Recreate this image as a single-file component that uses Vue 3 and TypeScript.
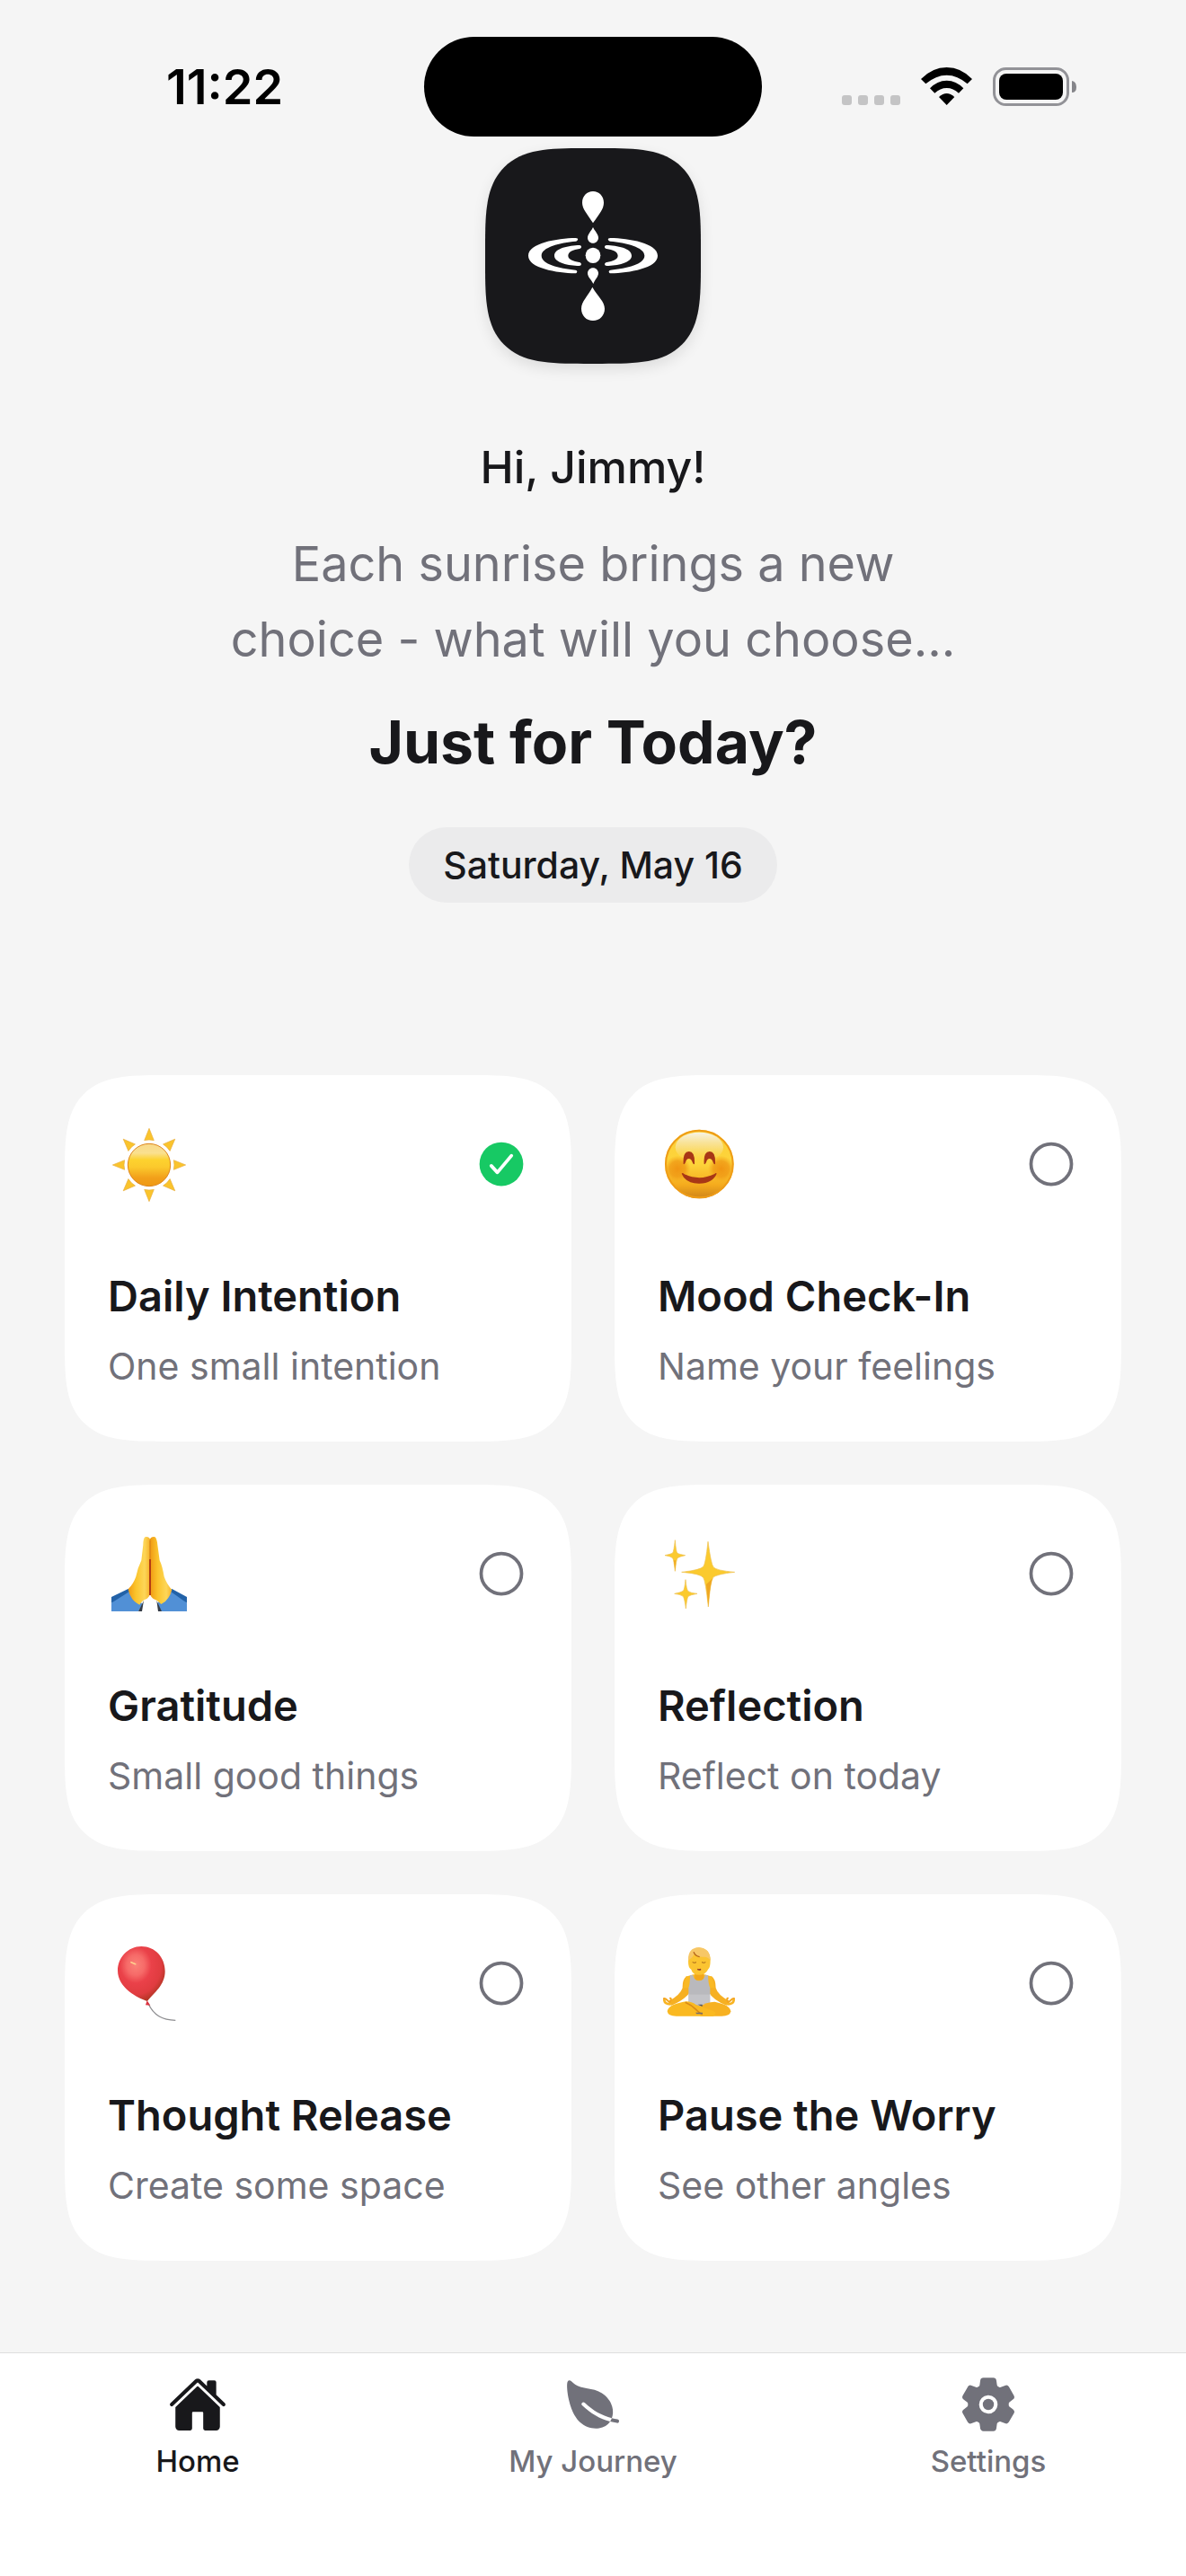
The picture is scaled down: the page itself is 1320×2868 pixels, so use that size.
<script setup lang="ts">
import { ref } from 'vue'

type ArtName = 'sun' | 'smile' | 'hands' | 'sparkles' | 'balloon' | 'lotus'

interface Practice {
  art: ArtName
  title: string
  note: string
  done: boolean
}

interface Tab {
  label: string
  href: string
  paths: string[]
}

const practices = ref<Practice[]>([
  { art: 'sun', title: 'Daily Intention', note: 'One small intention', done: true },
  { art: 'smile', title: 'Mood Check-In', note: 'Name your feelings', done: false },
  { art: 'hands', title: 'Gratitude', note: 'Small good things', done: false },
  { art: 'sparkles', title: 'Reflection', note: 'Reflect on today', done: false },
  { art: 'balloon', title: 'Thought Release', note: 'Create some space', done: false },
  { art: 'lotus', title: 'Pause the Worry', note: 'See other angles', done: false },
])

// Each drawing keeps its own origin inside a 288-unit square.
const viewBoxes: Record<ArtName, string> = {
  sun: '30 24 288 288',
  smile: '0 0 288 288',
  hands: '30 42 288 288',
  sparkles: '36 42 288 288',
  balloon: '30 30 288 288',
  lotus: '36 30 288 288',
}

const rays = [0, 45, 90, 135, 180, 225, 270, 315]

const active = ref('Home')

const tabs: Tab[] = [
  {
    label: 'Home',
    href: '#home',
    paths: [
      'M261.56 101.28a8 8 0 00-11.06 0L66.4 277.15a8 8 0 00-2.47 5.79L63.9 448a32 32 0 0032 32H192a16 16 0 0016-16V328a8 8 0 018-8h80a8 8 0 018 8v136a16 16 0 0016 16h96.06a32 32 0 0032-32V282.94a8 8 0 00-2.47-5.79z',
      'M490.91 244.15l-74.8-71.56V64a16 16 0 00-16-16h-48a16 16 0 00-16 16v32l-57.92-55.38C272.77 35.14 264.71 32 256 32c-8.68 0-16.72 3.14-22.14 8.63l-212.7 203.5c-6.22 6-7 15.87-1.34 22.37A16 16 0 0043 267.56L250.5 69.28a8 8 0 0111.06 0l207.52 198.28a16 16 0 0022.59-.44c6.14-6.36 5.63-16.86-.76-22.97z',
    ],
  },
  {
    label: 'My Journey',
    href: '#journey',
    paths: [
      'M161.35 242a16 16 0 0122.62-.68c73.63 69.36 147.51 111.56 234.45 133.07 11.73-32 12.77-67.22 2.64-101.58-13.44-45.59-44.74-85.31-90.49-114.86-40.84-26.38-81.66-33.25-121.15-39.89-49.82-8.38-96.88-16.3-141.79-63.85-5-5.26-11.81-7.37-18.32-5.66-7.44 2-12.43 7.88-14.82 17.6-5.6 22.75-2 86.51 13.75 153.82 25.29 108.14 65.65 162.86 95.06 189.73 38 34.69 87.62 53.9 136.93 53.9a186 186 0 0027.77-2.04c41.71-6.32 76.43-27.27 96-57.75-89.49-23.28-165.94-67.55-242-139.16a16 16 0 01-.65-22.65z',
      'M467.43 384.19c-16.83-2.59-33.13-5.84-49-9.77a157.71 157.71 0 01-12.13 25.68c-.73 1.25-1.5 2.49-2.29 3.71a584.21 584.21 0 0058.56 12 16 16 0 104.87-31.62z',
    ],
  },
  {
    label: 'Settings',
    href: '#settings',
    paths: [
      'M208 256a48 48 0 1096 0 48 48 0 10-96 0z',
      'M470.39 300l-.47-.38-31.56-24.75a16.11 16.11 0 01-6.1-13.33v-11.56a16 16 0 016.11-13.22L469.92 212l.47-.38a26.68 26.68 0 005.9-34.06l-42.71-73.9a1.59 1.59 0 01-.13-.22A26.86 26.86 0 00401 92.14l-.35.13-37.1 14.93a15.94 15.94 0 01-14.47-1.29q-4.92-3.1-10-5.86a15.94 15.94 0 01-8.19-11.82l-5.59-39.59-.12-.72A27.22 27.22 0 00298.76 26h-85.52a26.92 26.92 0 00-26.45 22.39l-.09.56-5.57 39.67a16 16 0 01-8.13 11.82 175.21 175.21 0 00-10 5.82 15.92 15.92 0 01-14.43 1.27l-37.13-15-.35-.14a26.87 26.87 0 00-32.48 11.34l-.13.22-42.77 73.95a26.71 26.71 0 005.9 34.1l.47.38 31.56 24.75a16.11 16.11 0 016.1 13.33v11.56a16 16 0 01-6.11 13.22L42.08 300l-.47.38a26.68 26.68 0 00-5.9 34.06l42.71 73.9a1.59 1.59 0 01.13.22 26.86 26.86 0 0032.45 11.3l.35-.13 37.07-14.93a15.94 15.94 0 0114.47 1.29q4.92 3.11 10 5.86a15.94 15.94 0 018.19 11.82l5.56 39.59.12.72A27.22 27.22 0 00213.24 486h85.52a26.92 26.92 0 0026.45-22.39l.09-.56 5.57-39.67a16 16 0 018.18-11.82c3.42-1.84 6.76-3.79 10-5.82a15.92 15.92 0 0114.43-1.27l37.13 14.95.35.14a26.85 26.85 0 0032.48-11.34 2.53 2.53 0 01.13-.22l42.71-73.89a26.7 26.7 0 00-5.89-34.11zm-134.48-40.24a80 80 0 11-83.66-83.67 80.21 80.21 0 0183.66 83.67z',
    ],
  },
]
</script>

<template>
  <div class="screen">
    <div class="status">
      <time class="clock">11:22</time>
      <div class="island"></div>
      <div class="signals">
        <div class="dots"><i v-for="n in 4" :key="n"></i></div>
        <svg class="wifi" viewBox="0 0 171 126" aria-hidden="true">
          <path d="M0 39Q38 0 86 0T171 39L155 55Q122 26 86 26T16 55Z" />
          <path d="M30 70Q54 44 86 44T142 70L126 86Q108 69 86 69T46 86Z" />
          <path d="M60 99Q86 75 112 99L86 126Z" />
        </svg>
        <svg class="battery" viewBox="0 0 93 43" aria-hidden="true">
          <rect x="1.5" y="1.5" width="82" height="40" rx="13" fill="none" stroke="#929297" stroke-width="3" />
          <rect x="7" y="7" width="71" height="29" rx="8" />
          <path d="M88 15Q93 16 93 22T88 28Z" fill="#85858a" />
        </svg>
      </div>
    </div>

    <main class="content">
      <header class="hero">
        <div class="logo">
          <svg viewBox="60 45 720 720" aria-hidden="true">
            <g fill="#fff">
              <path d="M420 189C440 189 456 205 456 227C456 248 440 266 420 295C402 266 384 248 384 227C384 205 400 189 420 189Z" />
              <path d="M420 309C426 322 438 332 438 344C438 354 430 362 420 362S402 354 402 344C402 332 414 322 420 309Z" />
              <ellipse cx="420" cy="403" rx="25" ry="26" />
              <path d="M420 445C430 445 438 453 438 463C438 474 428 482 421 498C412 482 402 474 402 463C402 453 410 445 420 445Z" />
              <path d="M418 509C436 540 459 557 459 581C459 604 442 621 420 621S381 604 381 581C381 557 402 540 418 509Z" />
              <path id="outer-ripple" d="M362 345C374 345 370 355 362 356C310 361 248 375 248 404C248 432 306 446 361 452C370 453 368 463 360 463C300 461 204 446 204 404C204 362 300 346 362 345Z" />
              <path id="inner-ripple" d="M375 369C384 370 382 380 375 381C354 384 337 391 337 404C337 416 354 422 374 426C384 428 382 438 374 438C340 437 291 428 291 404C291 379 340 370 375 369Z" />
              <use href="#outer-ripple" transform="matrix(-1 0 0 1 840 0)" />
              <use href="#inner-ripple" transform="matrix(-1 0 0 1 840 0)" />
            </g>
          </svg>
        </div>
        <p class="greeting">Hi, Jimmy!</p>
        <p class="quote">Each sunrise brings a new<br />choice - what will you choose...</p>
        <h1 class="headline">Just for Today?</h1>
        <p class="date">Saturday, May 16</p>
      </header>

      <section class="grid">
        <button v-for="item in practices" :key="item.title" type="button" class="card">
          <span class="card-top">
            <svg class="art" :viewBox="viewBoxes[item.art]" aria-hidden="true">
              <g v-if="item.art === 'sun'">
                <defs>
                  <linearGradient id="sun-body" x1="0" y1="0" x2="0" y2="1">
                    <stop offset="0" stop-color="#f8d98a" />
                    <stop offset=".22" stop-color="#fae08f" />
                    <stop offset=".38" stop-color="#fdd22f" />
                    <stop offset=".55" stop-color="#fbc92c" />
                    <stop offset=".8" stop-color="#f2a01a" />
                    <stop offset="1" stop-color="#ef9811" />
                  </linearGradient>
                </defs>
                <path
                  v-for="angle in rays"
                  :key="angle"
                  d="M168 49L184 89Q168 85 152 89Z"
                  fill="#fac42c"
                  stroke="#e9ad3c"
                  stroke-width="2"
                  :transform="`rotate(${angle} 168 171)`"
                />
                <circle cx="168" cy="171" r="71" fill="url(#sun-body)" stroke="#dd851b" stroke-width="3" />
              </g>

              <g v-else-if="item.art === 'smile'">
                <defs>
                  <linearGradient id="face" x1="0" y1="0" x2="0" y2="1">
                    <stop offset="0" stop-color="#fbd03a" />
                    <stop offset=".5" stop-color="#fdd43a" />
                    <stop offset=".8" stop-color="#f5ab1d" />
                    <stop offset="1" stop-color="#cf8419" />
                  </linearGradient>
                  <linearGradient id="shine" x1="0" y1="0" x2="0" y2="1">
                    <stop offset="0" stop-color="#f6f3e8" />
                    <stop offset=".5" stop-color="#f9e39a" stop-opacity=".7" />
                    <stop offset="1" stop-color="#fbdc62" stop-opacity="0" />
                  </linearGradient>
                  <radialGradient id="blush">
                    <stop offset="0" stop-color="#f09512" />
                    <stop offset=".6" stop-color="#f09a16" stop-opacity=".8" />
                    <stop offset="1" stop-color="#f5a51b" stop-opacity="0" />
                  </radialGradient>
                </defs>
                <circle cx="139" cy="144" r="115" fill="url(#face)" />
                <circle cx="139" cy="144" r="112" fill="none" stroke="#ee9c17" stroke-width="6" />
                <ellipse cx="139" cy="88" rx="80" ry="50" fill="url(#shine)" />
                <circle cx="66" cy="160" r="44" fill="url(#blush)" />
                <circle cx="212" cy="160" r="44" fill="url(#blush)" />
                <path
                  d="M86 144Q83 103 104 102T123 144Q118 146 116 138Q112 126 104 126T93 138Q90 146 86 144ZM155 144Q152 103 173 102T192 144Q187 146 185 138Q181 126 173 126T162 138Q159 146 155 144Z"
                  fill="#a83716"
                />
                <path d="M80 176Q83 172 88 177Q139 202 190 177Q195 172 197 176Q184 208 139 209T80 176Z" fill="#a83716" />
              </g>

              <g v-else-if="item.art === 'hands'">
                <defs>
                  <linearGradient id="palm" x1="0" y1="0" x2="1" y2="0">
                    <stop offset="0" stop-color="#f09a14" />
                    <stop offset=".35" stop-color="#fbc42c" />
                    <stop offset=".75" stop-color="#fdd658" />
                    <stop offset="1" stop-color="#f6b32a" />
                  </linearGradient>
                </defs>
                <path d="M42 284L98 237L146 288L132 312H42Z" fill="#5190d6" />
                <path d="M42 264L98 237L102 246L42 284Z" fill="#2262a8" />
                <path d="M294 284L244 237L196 284L208 312H294Z" fill="#5190d6" />
                <path d="M294 264L244 237L240 246L294 284Z" fill="#2262a8" />
                <path d="M132 312L150 276L144 312ZM210 312L193 276L198 312Z" fill="#333b46" />
                <path d="M171 70Q164 60 154 64Q148 70 148 90L142 142Q130 166 124 196Q116 220 98 238Q104 274 136 290Q146 274 160 270Q171 262 171 250Z" fill="url(#palm)" />
                <path d="M171 70Q178 60 188 64Q194 70 196 90L203 142Q212 160 218 196Q226 220 244 240Q236 274 208 288Q196 274 182 270Q171 262 171 250Z" fill="url(#palm)" />
                <path d="M171 74V142" stroke="#d98418" stroke-width="4" />
                <path d="M171 138V258" stroke="#b53c12" stroke-width="6" />
              </g>

              <g v-else-if="item.art === 'sparkles'" fill="#fbca2e" stroke="#eebf4b" stroke-width="2">
                <path d="M204 79Q214 154 222 164Q232 176 293 181Q232 188 221 199Q212 210 205 297Q196 210 188 199Q178 186 116 181Q178 174 188 163Q196 154 204 79Z" />
                <path d="M94 74Q97 114 102 118Q108 122 128 125Q108 129 102 134Q98 140 94 178Q90 140 86 134Q80 128 60 125Q80 121 86 117Q90 112 94 74Z" />
                <path d="M129 206Q132 240 138 245Q144 250 168 253Q144 257 138 262Q133 270 130 303Q126 270 121 262Q114 256 92 253Q114 249 121 244Q126 238 129 206Z" />
                <path d="M96 142L94 176L90 142ZM221 200Q212 210 205 295L198 222Z" fill="#efa722" stroke="none" />
              </g>

              <g v-else-if="item.art === 'balloon'">
                <defs>
                  <radialGradient id="rubber" cx=".38" cy=".34" r=".72">
                    <stop offset="0" stop-color="#fa8278" />
                    <stop offset=".26" stop-color="#f66a68" />
                    <stop offset=".46" stop-color="#ea4149" />
                    <stop offset=".75" stop-color="#e03c40" />
                    <stop offset="1" stop-color="#a5331c" />
                  </radialGradient>
                </defs>
                <path d="M164 240C184 284 214 297 256 298" fill="none" stroke="#8d8d90" stroke-width="4" />
                <path d="M142 51C188 51 221 88 221 134C221 180 184 206 162 234C130 224 63 190 63 132C63 88 98 51 142 51Z" fill="url(#rubber)" />
                <path d="M161 232L172 248L156 247Z" fill="#dc3340" />
                <path d="M108 104l14 6" stroke="#ffd08e" stroke-width="5" stroke-linecap="round" />
              </g>

              <g v-else>
                <path d="M134 150Q118 158 119 190Q112 212 74 234L82 248Q128 230 146 200ZM214 150Q230 158 230 190Q236 212 274 234L266 248Q220 230 204 200Z" fill="#f6b022" />
                <path d="M130 152Q174 134 218 152L226 190H122Z" fill="#f9b924" />
                <rect x="160" y="130" width="30" height="34" fill="#f2a71c" />
                <path d="M144 147H154Q158 166 174 166T194 147H204Q205 178 211 190V256H139V190Q144 178 144 147Z" fill="#b9b9bd" />
                <path d="M140 212H210V246H140Z" fill="#c4c4c8" />
                <path d="M138 102Q138 62 174 56Q210 56 212 96Q212 124 204 128Q196 146 174 146T148 128Q138 124 138 102Z" fill="#fbc431" />
                <path d="M138 98Q136 56 174 54Q212 58 212 98Q204 86 192 86Q168 88 160 74Q152 90 138 98Z" fill="#f7c766" />
                <path d="M156 70Q162 84 176 86" fill="none" stroke="#b3611b" stroke-width="4" />
                <path d="M152 104q7 4 13 0M183 104q7 4 13 0" fill="none" stroke="#a4641a" stroke-width="3" />
                <path d="M169 127q6 4 11 0" fill="none" stroke="#8c3527" stroke-width="5" />
                <path d="M280 268Q278 246 226 236Q200 236 172 254L178 284H250Q278 284 280 268Z" fill="#f7b121" />
                <path d="M68 268Q70 246 122 236Q144 232 164 246L214 264Q240 272 222 284H98Q70 284 68 268Z" fill="#fab921" />
                <path d="M128 238Q150 248 164 262T186 278" fill="none" stroke="#d98a18" stroke-width="5" />
                <path d="M170 245H185V252Z" fill="#55545c" />
                <path d="M162 272H186V277H166Z" fill="#77706c" />
                <path d="M58 230Q54 222 62 226L76 238Q84 226 78 224M290 230Q294 222 286 226L272 238Q264 226 270 224" fill="none" stroke="#f3a51e" stroke-width="6" stroke-linecap="round" />
                <path d="M58 232Q60 244 78 244M290 232Q288 244 270 244" fill="none" stroke="#f8b423" stroke-width="8" stroke-linecap="round" />
              </g>
            </svg>
            <svg class="mark" viewBox="0 0 512 512" aria-hidden="true">
              <template v-if="item.done">
                <circle cx="256" cy="256" r="208" fill="#17c964" />
                <path d="M352 176L218 336l-58-64" fill="none" stroke="#fff" stroke-width="32" stroke-linecap="round" stroke-linejoin="round" />
              </template>
              <circle v-else cx="256" cy="256" r="192" fill="none" stroke="#71717a" stroke-width="32" />
            </svg>
          </span>
          <span class="card-title">{{ item.title }}</span>
          <span class="card-note">{{ item.note }}</span>
        </button>
      </section>
    </main>

    <nav class="tabs">
      <a
        v-for="tab in tabs"
        :key="tab.label"
        :href="tab.href"
        class="tab"
        :class="{ active: tab.label === active }"
        @click.prevent="active = tab.label"
      >
        <svg viewBox="0 0 512 512" aria-hidden="true">
          <path v-for="d in tab.paths" :key="d" :d="d" />
        </svg>
        <span>{{ tab.label }}</span>
      </a>
    </nav>
  </div>
</template>

<style>
body {
  background: #f5f5f5;
}
</style>

<style scoped>
.screen {
  display: flex;
  flex-direction: column;
  min-height: 100vh;
  background: #f5f5f5;
  color: #18181b;
  font-family: Inter, "Noto Sans", sans-serif;
}

.status {
  display: grid;
  grid-template-columns: 1fr 376px 1fr;
  align-items: center;
  padding-top: 41px;
  color: #000;
}

.clock {
  padding-left: 28px;
  text-align: center;
  font-size: 54px;
  font-weight: 600;
  line-height: 60px;
}

.island {
  height: 111px;
  border-radius: 56px;
  background: #000;
}

.signals {
  display: flex;
  justify-content: flex-end;
  align-items: flex-end;
  gap: 23px;
  padding-right: 122px;
}

.dots {
  display: flex;
  gap: 7px;
  padding-bottom: 1px;
}

.dots i {
  width: 11px;
  height: 11px;
  border-radius: 3px;
  background: #c4c4c5;
}

.wifi {
  width: 57px;
  height: 42px;
  padding-bottom: 1px;
}

.battery {
  width: 93px;
  height: 43px;
}

.content {
  padding: 13px 72px 102px;
}

.hero {
  display: flex;
  flex-direction: column;
  align-items: center;
  text-align: center;
}

.hero p,
.hero h1 {
  margin: 0;
}

.logo {
  width: 240px;
  height: 240px;
  border-radius: 76px;
  background: #18181b;
  box-shadow: 0 6px 16px rgba(0, 0, 0, 0.1);
}

.logo svg {
  display: block;
  width: 100%;
  height: 100%;
}

.hero .greeting {
  margin-top: 79px;
  font-size: 50px;
  font-weight: 500;
  line-height: 72px;
}

.hero .quote {
  margin-top: 30px;
  color: #71717a;
  font-size: 54px;
  font-weight: 400;
  line-height: 84px;
}

.hero .headline {
  margin-top: 30px;
  font-size: 66px;
  font-weight: 700;
  line-height: 84px;
}

.hero .date {
  margin-top: 53px;
  padding: 0 38px;
  border-radius: 42px;
  background: #ebebec;
  font-size: 41px;
  font-weight: 500;
  line-height: 84px;
}

.grid {
  display: grid;
  grid-template-columns: repeat(2, minmax(0, 1fr));
  gap: 48px;
  margin-top: 192px;
}

.card {
  display: flex;
  flex-direction: column;
  padding: 51px 48px 54px;
  border: 0;
  border-radius: 76px;
  background: #fff;
  color: inherit;
  font-family: inherit;
  text-align: left;
  cursor: pointer;
}

@supports (corner-shape: squircle) {
  .logo,
  .card {
    border-radius: 110px;
    corner-shape: superellipse(1.7);
  }
}

.card-top {
  display: flex;
  justify-content: space-between;
  align-items: center;
}

.art {
  width: 96px;
  height: 96px;
  overflow: visible;
}

.mark {
  width: 60px;
  height: 60px;
}

.card-title {
  margin-top: 69px;
  font-size: 47px;
  font-weight: 600;
  line-height: 60px;
}

.card-note {
  margin-top: 18px;
  color: #71717a;
  font-size: 41px;
  font-weight: 400;
  line-height: 60px;
}

.tabs {
  display: grid;
  grid-template-columns: repeat(3, 1fr);
  margin-top: auto;
  padding: 24px 0 108px;
  border-top: 1px solid #dededf;
  background: #fff;
}

.tab {
  display: flex;
  flex-direction: column;
  align-items: center;
  gap: 10px;
  color: #71717a;
  font-size: 33px;
  font-weight: 500;
  line-height: 40px;
  text-decoration: none;
}

.tab.active {
  color: #18181b;
}

.tab svg {
  width: 66px;
  height: 66px;
  fill: currentColor;
}
</style>
